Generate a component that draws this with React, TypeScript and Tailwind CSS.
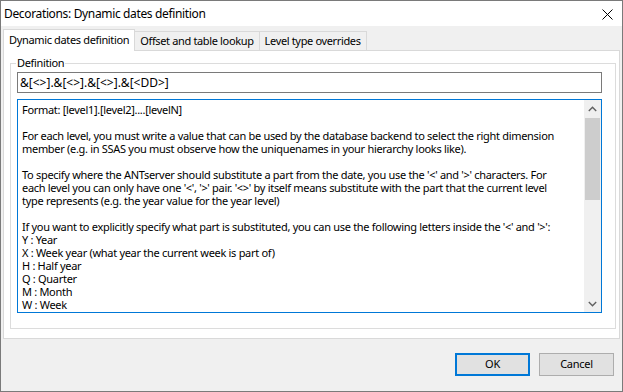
import React from "react";

const UI = { fontFamily: '"Noto Sans", "Open Sans", sans-serif' };

const lines = [
  "Format: [level1].[level2]....[levelN]",
  "",
  "For each level, you must write a value that can be used by the database backend to select the right dimension",
  "member (e.g. in SSAS you must observe how the uniquenames in your hierarchy looks like).",
  "",
  "To specify where the ANTserver should substitute a part from the date, you use the '<' and '>' characters. For",
  "each level you can only have one '<', '>' pair. '<>' by itself means substitute with the part that the current level",
  "type represents (e.g. the year value for the year level)",
  "",
  "If you want to explicitly specify what part is substituted, you can use the following letters inside the '<' and '>':",
  "Y : Year",
  "X : Week year (what year the current week is part of)",
  "H : Half year",
  "Q : Quarter",
  "M : Month",
  "W : Week",
];

export default function App() {
  return (
    <div
      className="w-[623px] h-[392px] bg-[#f0f0f0] border border-[#7a7a7a] flex flex-col text-black overflow-hidden"
      style={UI}
    >
      {/* Title bar */}
      <div className="h-[25px] bg-white flex items-center justify-between pl-[3px] pr-[9px] shrink-0">
        <span className="text-[12px] leading-none tracking-[-0.35px]">Decorations: Dynamic dates definition</span>
        <svg width="11" height="11" viewBox="0 0 11 11" className="mt-[1px]">
          <path d="M0.5 0.5 L10.5 10.5 M10.5 0.5 L0.5 10.5" stroke="#000" strokeWidth="1" fill="none" />
        </svg>
      </div>

      {/* Tabs */}
      <div className="px-[2px] pt-[2px] flex flex-col">
        <div className="flex items-end h-[22px] relative z-10 text-[11px] tracking-[-0.35px]">
          <div className="h-[22px] bg-white border border-[#d9d9d9] border-b-0 px-[5px] flex items-center -mb-[1px]">
            Dynamic dates definition
          </div>
          <div className="h-[19px] bg-[#f0f0f0] border border-[#d9d9d9] border-l-0 border-b-0 px-[5px] flex items-center">
            Offset and table lookup
          </div>
          <div className="h-[19px] bg-[#f0f0f0] border border-[#d9d9d9] border-l-0 border-b-0 px-[5px] flex items-center">
            Level type overrides
          </div>
        </div>

        {/* Panel */}
        <div className="h-[289px] bg-white border border-[#d9d9d9] pl-[6px] pr-[3px] pt-[12px]">
          <div className="relative h-[266px] border border-[#dcdcdc] pl-[6px] pr-[13px] pt-[8px]">
            <span className="absolute left-[5px] -top-[8px] bg-white px-[1px] text-[11px] leading-[14px] tracking-[-0.35px]">
              Definition
            </span>
            <div className="h-[21px] border border-[#7a7a7a] flex items-center pl-[2px] text-[12px]">
              &amp;[&lt;&gt;].&amp;[&lt;&gt;].&amp;[&lt;&gt;].&amp;[&lt;DD&gt;]
            </div>
            <div className="mt-[6px] h-[214px] border border-[#0078d7] flex">
              <div className="flex-1 pl-[4px] pt-[3px] text-[11px] leading-[13px] tracking-[-0.3px] whitespace-pre overflow-hidden">
                {lines.map((l, i) => (
                  <div key={i} className="h-[13px]">{l}</div>
                ))}
              </div>
              <div className="w-[17px] bg-[#f0f0f0] flex flex-col items-center">
                <div className="h-[17px] flex items-center justify-center">
                  <svg width="9" height="6" viewBox="0 0 9 6">
                    <path d="M0.8 5 L4.5 1.3 L8.2 5" stroke="#606060" strokeWidth="1.4" fill="none" />
                  </svg>
                </div>
                <div className="w-[15px] h-[82px] bg-[#cdcdcd] mt-[1px]" />
                <div className="flex-1" />
                <div className="h-[17px] flex items-center justify-center">
                  <svg width="9" height="6" viewBox="0 0 9 6">
                    <path d="M0.8 1 L4.5 4.7 L8.2 1" stroke="#606060" strokeWidth="1.4" fill="none" />
                  </svg>
                </div>
              </div>
            </div>
          </div>
        </div>
      </div>

      {/* Buttons */}
      <div className="flex justify-end gap-[9px] pr-[8px] pt-[14px] text-[11px] tracking-[-0.25px]">
        <button className="w-[75px] h-[23px] bg-[#e1e1e1] border-2 border-[#0078d7] flex items-center justify-center">
          OK
        </button>
        <button className="w-[75px] h-[23px] bg-[#e1e1e1] border border-[#adadad] flex items-center justify-center">
          Cancel
        </button>
      </div>
    </div>
  );
}
